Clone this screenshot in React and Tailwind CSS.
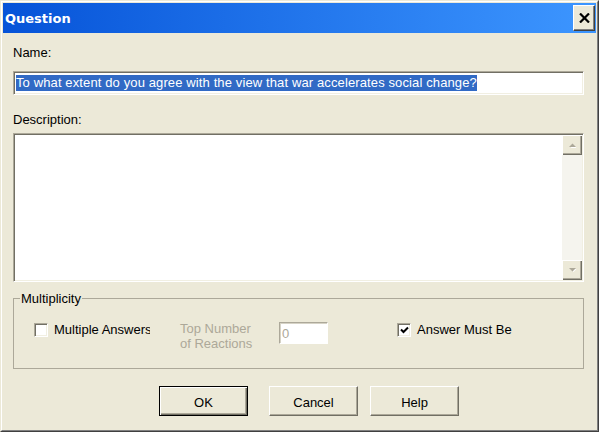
import React from "react";

function Arrow({ up }) {
  return (
    <svg width="9" height="6" viewBox="0 0 9 6">
      {up ? (
        <>
          <polygon points="1.5,5 4.5,2 7.5,5" fill="#fff" transform="translate(1,1)" />
          <polygon points="1,5 4.5,1.5 8,5" fill="#aca899" />
        </>
      ) : (
        <>
          <polygon points="1.5,1 4.5,4 7.5,1" fill="#fff" transform="translate(1,1)" />
          <polygon points="1,1 4.5,4.5 8,1" fill="#aca899" />
        </>
      )}
    </svg>
  );
}

function Check({ checked }) {
  return (
    <div className="w-[14px] h-[14px] shrink-0 mt-px bg-white border border-t-[#aca899] border-l-[#aca899] border-r-white border-b-white shadow-[inset_1px_1px_#716f64,inset_-1px_-1px_#f1efe2] flex items-center justify-center">
      {checked && (
        <svg width="9" height="8" viewBox="0 0 9 8">
          <path d="M1 3.5 L3.5 6 L8 1.5" stroke="#000" strokeWidth="2" fill="none" />
        </svg>
      )}
    </div>
  );
}

function Btn({ label, def, className }) {
  if (def) {
    return (
      <button className={"w-[89px] h-[30px] border border-black bg-[#ece9d8] shadow-[inset_1px_1px_#fff,inset_-1px_-1px_#716f64,inset_-2px_-2px_#aca899] text-[13px] text-black pt-[2px] " + className}>
        {label}
      </button>
    );
  }
  return (
    <button className={"w-[89px] h-[30px] bg-[#ece9d8] border border-t-white border-l-white border-r-[#716f64] border-b-[#716f64] shadow-[inset_-1px_-1px_#aca899] text-[13px] text-black pt-[2px] " + className}>
      {label}
    </button>
  );
}

export default function App() {
  return (
    <div className="w-[599px] h-[432px] bg-[#ece9d8] border border-t-[#ece9d8] border-l-[#ece9d8] border-r-[#404040] border-b-[#404040] font-['Liberation_Sans',Arial,sans-serif] text-[13px] leading-[15px] text-black">
      <div className="h-full border border-t-white border-l-white border-r-[#808080] border-b-[#808080] p-px flex flex-col">
        {/* title bar */}
        <div className="h-[30px] shrink-0 flex items-center bg-gradient-to-r from-[#0653d8] to-[#3d96ff] pl-[2px] pr-px">
          <span className="font-['DejaVu_Sans',sans-serif] font-bold text-[13px] text-white">Question</span>
          <button className="ml-auto w-[22px] h-[26px] bg-[#ece9d8] border border-t-white border-l-white border-r-[#404040] border-b-[#404040] shadow-[inset_-1px_-1px_#808080] flex items-center justify-center">
            <svg width="11" height="10" viewBox="0 0 11 10">
              <path d="M1 0.5 L10 9.5 M10 0.5 L1 9.5" stroke="#000" strokeWidth="2.2" />
            </svg>
          </button>
        </div>

        <div className="flex-1 flex flex-col pl-[10px] pr-[12px]">
          <div className="mt-[12px]">Name:</div>
          <div className="mt-[11px] h-[24px] bg-white border border-t-[#aca899] border-l-[#aca899] border-r-white border-b-white shadow-[inset_1px_1px_#716f64,inset_-1px_-1px_#f1efe2] flex items-center pl-[2px] overflow-hidden whitespace-nowrap">
            <span className="inline-block bg-[#316ac5] text-white leading-[16px] tracking-[0.12px]">
              To what extent do you agree with the view that war accelerates social change?
            </span>
          </div>

          <div className="mt-[17px]">Description:</div>
          <div className="mt-[6px] h-[149px] bg-white border border-t-[#aca899] border-l-[#aca899] border-r-white border-b-white p-px shadow-[inset_1px_1px_#716f64,inset_-1px_-1px_#f1efe2] flex">
            <div className="flex-1" />
            <div className="w-[20px] flex flex-col">
              <div className="h-[20px] bg-[#ece9d8] shadow-[inset_1px_1px_#fff,inset_-1px_-1px_#716f64,inset_-2px_-2px_#aca899] flex items-center justify-center">
                <Arrow up />
              </div>
              <div className="flex-1 bg-[#f5f4ee]" />
              <div className="h-[20px] bg-[#ece9d8] shadow-[inset_1px_1px_#fff,inset_-1px_-1px_#716f64,inset_-2px_-2px_#aca899] flex items-center justify-center">
                <Arrow />
              </div>
            </div>
          </div>

          <fieldset className="mt-[9px] border border-[#aca899] px-0 pt-[16px] pb-[17px]">
            <legend className="ml-[6px] px-px">Multiplicity</legend>
            <div className="flex items-start pl-[20px]">
              <Check />
              <div className="ml-[6px] w-[96px] mr-[3px] overflow-hidden whitespace-nowrap">Multiple Answers</div>
              <div className="ml-[27px] w-[99px] text-[#aca899] -mt-px">
                <div>Top Number</div>
                <div>of Reactions</div>
              </div>
              <div className="w-[49px] h-[22px] bg-white border border-t-[#aca899] border-l-[#aca899] border-r-white border-b-white shadow-[inset_1px_1px_#d6d3c6] pl-[2px] flex items-center text-[#aca899]">
                0
              </div>
              <div className="ml-[69px]">
                <Check checked />
              </div>
              <div className="ml-[6px] whitespace-nowrap">Answer Must Be</div>
            </div>
          </fieldset>

          <div className="mt-[17px] flex">
            <Btn label="OK" def className="ml-[146px]" />
            <Btn label="Cancel" className="ml-[21px]" />
            <Btn label="Help" className="ml-[12px] w-[87px]" />
          </div>
        </div>
      </div>
    </div>
  );
}
